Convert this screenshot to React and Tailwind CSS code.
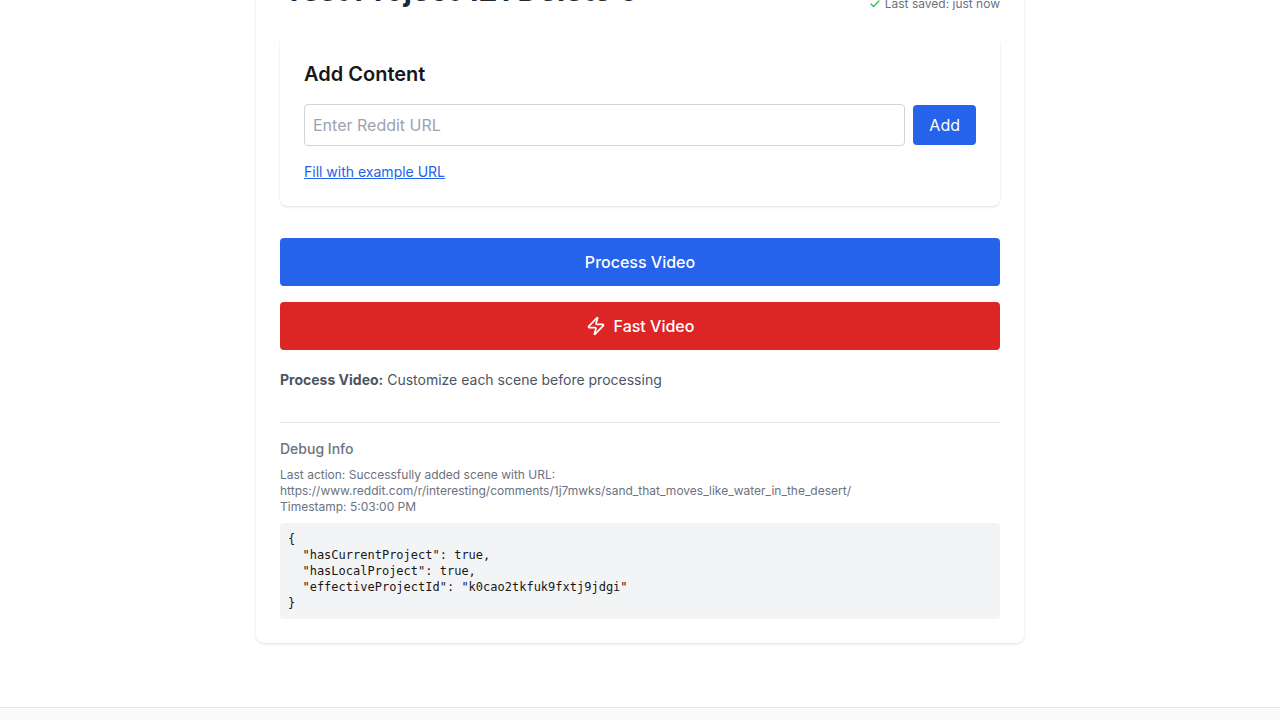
import { Zap, Check } from "lucide-react";

const debugState = {
  hasCurrentProject: true,
  hasLocalProject: true,
  effectiveProjectId: "k0cao2tkfuk9fxtj9jdgi",
};

const cardShadow = "shadow-[0_1px_3px_0_rgba(0,0,0,0.1),0_1px_2px_-1px_rgba(0,0,0,0.1)]";

function Header() {
  return (
    <header className="mb-5 flex items-end justify-between">
      <h1 className="px-1 py-2 text-[30px] leading-9 font-bold text-[#1f2937]">Test Project 121 Delete 0</h1>
      <div className="mb-1 flex items-center text-xs text-[#6b7280]">
        <Check className="mr-1 h-3 w-3 text-[#22c55e]" strokeWidth={2.5} />
        <span>Last saved: just now</span>
      </div>
    </header>
  );
}

function AddContent() {
  return (
    <section className={`mb-8 rounded-lg bg-white p-6 ${cardShadow}`}>
      <h2 className="mb-4 text-xl font-semibold text-[#171717]">Add Content</h2>
      <div className="mb-4 flex items-center gap-2">
        <input
          type="text"
          placeholder="Enter Reddit URL"
          className="h-[42px] min-w-0 flex-1 rounded border border-[#d1d5db] p-2 placeholder:text-[#9ca3af]"
        />
        <button className="h-10 rounded bg-[#2563eb] px-4 text-white">Add</button>
      </div>
      <button className="block text-sm text-[#2563eb] underline">Fill with example URL</button>
    </section>
  );
}

function DebugInfo() {
  return (
    <section className="mt-8 border-t border-[#e5e7eb] pt-4">
      <h3 className="mb-2 text-sm font-medium text-[#6b7280]">Debug Info</h3>
      <div className="text-xs text-[#6b7280]">
        <p>
          Last action: Successfully added scene with URL:
          <br />
          https://www.reddit.com/r/interesting/comments/1j7mwks/sand_that_moves_like_water_in_the_desert/
        </p>
        <p>Timestamp: 5:03:00 PM</p>
      </div>
      <pre className="mt-2 rounded bg-[#f3f4f6] p-2 font-['DejaVu_Sans_Mono',monospace] text-xs text-[#171717]">
        {JSON.stringify(debugState, null, 2)}
      </pre>
    </section>
  );
}

export default function App() {
  return (
    <div className="flex h-[720px] flex-col overflow-hidden bg-white font-['Inter',sans-serif] text-base text-[#171717]">
      <main className={`mx-auto -mt-[60px] w-[768px] shrink-0 rounded-lg bg-white p-6 ${cardShadow}`}>
        <Header />
        <AddContent />
        <div className="flex flex-col gap-4">
          <button className="h-12 rounded bg-[#2563eb] font-medium text-white">Process Video</button>
          <button className="flex h-12 items-center justify-center rounded bg-[#dc2626] font-medium text-white">
            <Zap className="mr-2 h-5 w-5" />
            Fast Video
          </button>
        </div>
        <p className="mt-5 text-sm text-[#4b5563]">
          <strong className="font-bold">Process Video:</strong> Customize each scene before processing
        </p>
        <DebugInfo />
      </main>
      <footer className="mt-16 h-20 shrink-0 border-t border-[#e5e7eb] bg-[#f9fafb]" />
    </div>
  );
}
